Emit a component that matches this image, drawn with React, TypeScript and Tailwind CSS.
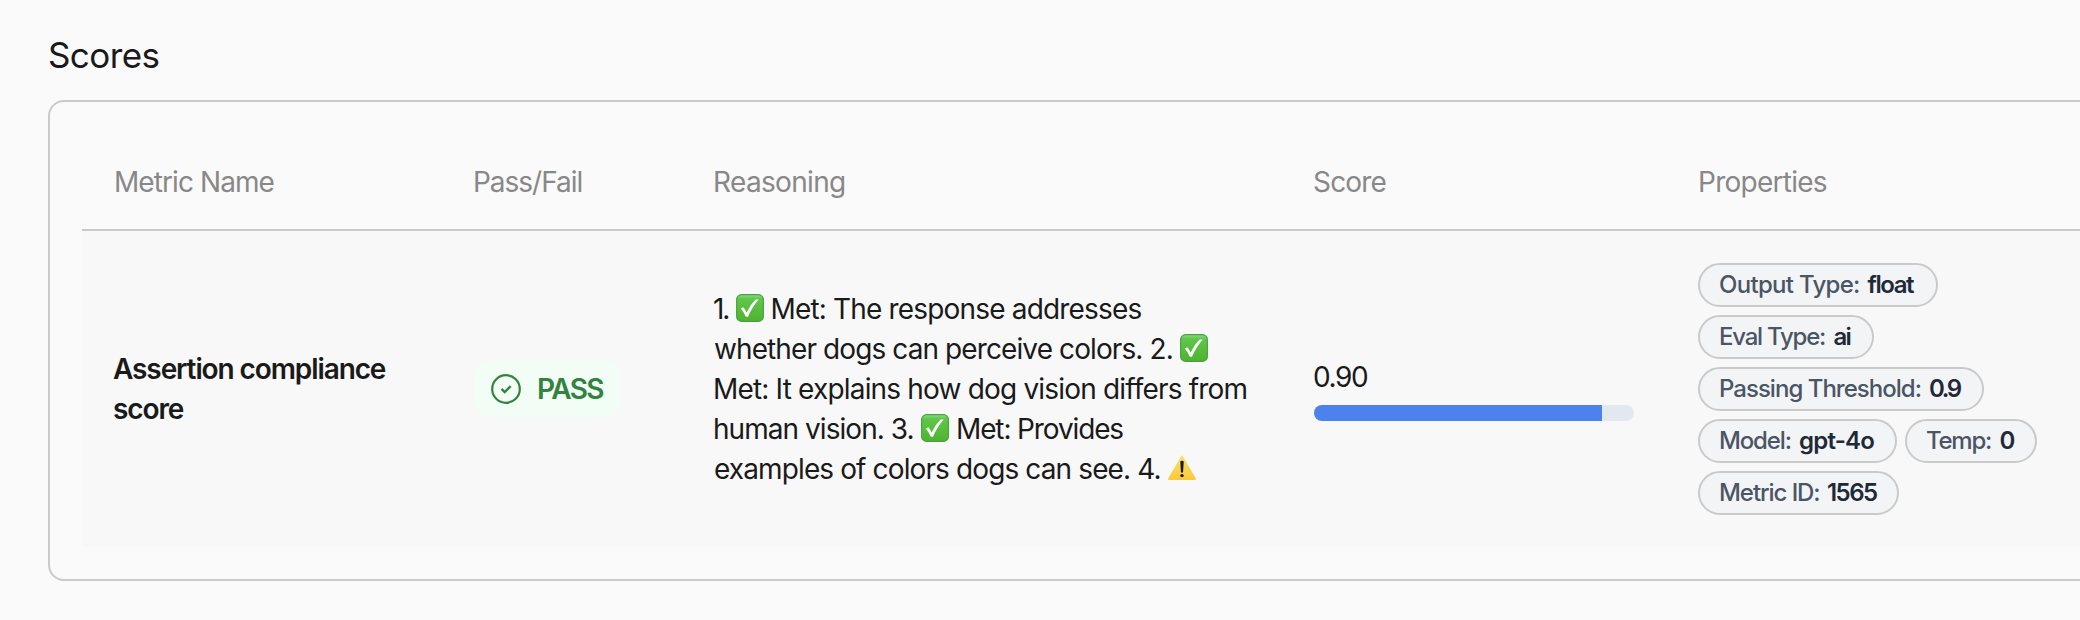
import type { ReactNode } from "react";

function CheckEmoji({ className }: { className: string }) {
  return (
    <svg viewBox="0 0 28 28" role="img" aria-label="✅" className={`-mt-0.5 h-7 w-7 shrink-0 ${className}`}>
      <defs>
        <linearGradient id="check-fill" x1="0" y1="0" x2="0" y2="1">
          <stop offset="0" stopColor="#8bdc86" />
          <stop offset="0.16" stopColor="#5fc64b" />
          <stop offset="1" stopColor="#50b32f" />
        </linearGradient>
      </defs>
      <rect x="0.6" y="0.6" width="26.8" height="26.8" rx="5" fill="url(#check-fill)" stroke="#4c9f40" strokeWidth="1.1" />
      <path d="M4.8 14.6 L7.4 13.2 Q9.2 15.4 10.6 18.4 Q14.4 10.6 19.6 5.6 L22.7 5.6 Q16.2 12.8 12 22.8 L9.9 22.8 Q8 18.4 4.8 14.6 Z" fill="#fff" />
    </svg>
  );
}

function WarningEmoji({ className }: { className: string }) {
  return (
    <svg viewBox="0 0 28 28" role="img" aria-label="⚠️" className={`-mt-0.5 h-7 w-7 shrink-0 ${className}`}>
      <defs>
        <linearGradient id="warning-fill" x1="0" y1="0" x2="0" y2="1">
          <stop offset="0" stopColor="#fbe06a" />
          <stop offset="1" stopColor="#f9c93f" />
        </linearGradient>
      </defs>
      <path d="M14 2.4 L27 25 L1 25 Z" fill="url(#warning-fill)" stroke="url(#warning-fill)" strokeWidth="1.8" strokeLinejoin="round" />
      <path d="M12.3 7.8 Q12.3 6.8 14 6.8 Q15.7 6.8 15.7 7.8 L15 18.4 L13 18.4 Z" fill="#1d1a10" />
      <circle cx="14" cy="21.6" r="1.7" fill="#1d1a10" />
    </svg>
  );
}

function PassIcon() {
  return (
    <svg viewBox="0 0 32 32" fill="none" stroke="currentColor" className="h-8 w-8 shrink-0" aria-hidden="true">
      <circle cx="16" cy="16" r="13.8" strokeWidth="2.2" />
      <path d="M11.5 15.9 L14.7 19 L20.7 13.2" strokeWidth="2.4" />
    </svg>
  );
}

function Chip({ label, value, className, labelClass, valueClass }: { label: string; value: string; className: string; labelClass: string; valueClass: string }) {
  return (
    <span className={`flex h-11 items-center rounded-full border-2 border-[#cacaca] bg-gray-100 pl-[19px] text-2xl leading-10 whitespace-nowrap ${className}`}>
      <span className={`shrink-0 font-medium text-gray-600 ${labelClass}`}>{label}</span>
      <span className={`shrink-0 font-semibold text-gray-800 ${valueClass}`}>{value}</span>
    </span>
  );
}

function Line({ children }: { children: ReactNode }) {
  return <div className="flex h-10 items-center whitespace-nowrap">{children}</div>;
}

const grid = "grid grid-cols-[360px_240px_600px_384px_414px]";

export default function App() {
  return (
    <main className="h-[620px] w-[2080px] overflow-hidden bg-[#fafafa] pt-[35px] pl-12 font-['Inter',sans-serif] text-[28px] leading-10 text-[#1a1a1a]">
      <h1 className="text-[35px] leading-10 tracking-[-0.6px]">Scores</h1>
      <section className="mt-[25px] h-[481px] w-[2100px] rounded-2xl border-2 border-[#cacaca] p-8">
        <div className={`${grid} h-[97px] items-center border-b-2 border-[#cacaca] pt-px text-[#888888]`}>
          <div className="pl-8 tracking-[-0.92px]">Metric Name</div>
          <div className="pl-[31px] tracking-[-1.01px]">Pass/Fail</div>
          <div className="pl-[31px] tracking-[-0.66px]">Reasoning</div>
          <div className="pl-[31px] tracking-[-0.83px]">Score</div>
          <div className="pl-8 tracking-[-0.74px]">Properties</div>
        </div>
        <div className={`${grid} h-[316px] items-center bg-[#f8f8f8]`}>
          <div className="pl-8 font-semibold">
            <div className="-ml-px tracking-[-1.1px]">Assertion compliance</div>
            <div className="-ml-px tracking-[-1.1px]">score</div>
          </div>
          <div className="pl-8">
            <span className="flex h-14 w-[146px] items-center rounded-2xl bg-[#f2fdf5] pl-4 text-[#32833d]">
              <PassIcon />
              <span className="ml-[15px] font-semibold tracking-[-1.6px]">PASS</span>
            </span>
          </div>
          <div className="pl-8">
            <Line>
              <span className="-ml-px w-[22.5px] tracking-[-2.2px]">1.</span>
              <CheckEmoji className="mr-[7px]" />
              <span className="tracking-[-0.83px]">Met: The response addresses</span>
            </Line>
            <Line>
              <span className="w-[466px] tracking-[-0.9px]">whether dogs can perceive colors. 2.</span>
              <CheckEmoji className="" />
            </Line>
            <Line>
              <span className="-ml-px tracking-[-0.82px]">Met: It explains how dog vision differs from</span>
            </Line>
            <Line>
              <span className="-ml-px w-[208px] tracking-[-0.95px]">human vision. 3.</span>
              <CheckEmoji className="mr-[7px]" />
              <span className="tracking-[-1.13px]">Met: Provides</span>
            </Line>
            <Line>
              <span className="w-[454px] tracking-[-0.88px]">examples of colors dogs can see. 4.</span>
              <WarningEmoji className="" />
            </Line>
          </div>
          <div className="px-8">
            <div className="-ml-px tracking-[-1.4px]">0.90</div>
            <div className="mt-2 h-4 overflow-hidden rounded-full bg-slate-200">
              <div className="h-full w-9/10 bg-[#4d81ee]" />
            </div>
          </div>
          <div className="flex flex-col gap-2 pl-8">
            <Chip label="Output Type:" value="float" className="w-[240px]" labelClass="tracking-[-0.7px] w-[148.5px]" valueClass="tracking-[-1.41px]" />
            <Chip label="Eval Type:" value="ai" className="w-[176px]" labelClass="tracking-[-1.23px] w-[114.5px]" valueClass="tracking-[-1.78px]" />
            <Chip label="Passing Threshold:" value="0.9" className="w-[286px]" labelClass="tracking-[-0.98px] w-[210px]" valueClass="tracking-[-2.4px]" />
            <div className="flex gap-2">
              <Chip label="Model:" value="gpt-4o" className="w-[199px]" labelClass="tracking-[-1.14px] w-[80px]" valueClass="tracking-[-0.78px]" />
              <Chip label="Temp:" value="0" className="w-[132px]" labelClass="tracking-[-1.26px] w-[73.5px]" valueClass="" />
            </div>
            <Chip label="Metric ID:" value="1565" className="w-[201px]" labelClass="tracking-[-1.06px] w-[108px]" valueClass="tracking-[-1.53px]" />
          </div>
        </div>
      </section>
    </main>
  );
}
